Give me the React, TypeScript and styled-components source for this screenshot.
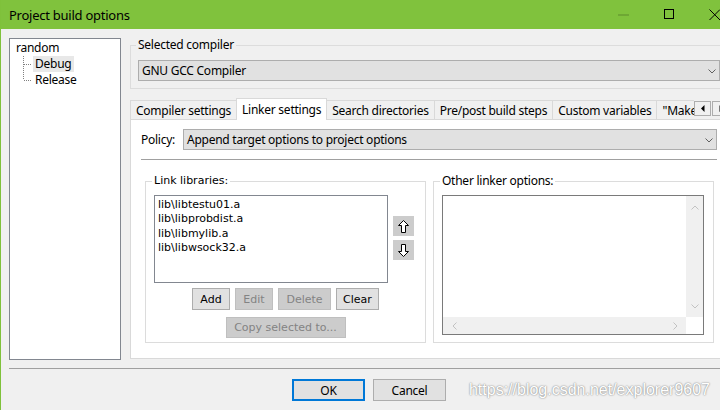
import React from "react";
import styled, { createGlobalStyle, css } from "styled-components";

const GlobalStyle = createGlobalStyle`
  html, body { margin: 0; padding: 0; background: #f0f0f0; }
  body { font-family: "Noto Sans", "Noto Sans CJK SC", sans-serif; }
  * { box-sizing: border-box; }
`;

const ui = css`
  font-family: "Noto Sans", "Noto Sans CJK SC", sans-serif;
  font-size: 12px;
  letter-spacing: -0.25px;
  color: #000;
`;

const classic = css`
  font-family: "DejaVu Sans", "Liberation Sans", sans-serif;
  font-size: 11px;
  color: #000;
`;

const Window = styled.div`
  width: 720px;
  height: 410px;
  overflow: hidden;
  background: #f0f0f0;
  border-left: 1px solid #7fc13b;
  display: flex;
  flex-direction: column;
`;

const TitleBar = styled.div`
  flex: 0 0 29px;
  background: #80c23d;
  display: flex;
  align-items: center;
  padding-left: 8px;
`;

const Title = styled.div`
  ${ui};
  font-size: 13px;
  line-height: 16px;
`;

const Caption = styled.div`
  margin-left: auto;
  margin-right: -18px;
  display: flex;
  height: 100%;
  flex-shrink: 0;
`;

const CaptionBtn = styled.div`
  width: 46px;
  height: 100%;
  display: flex;
  align-items: center;
  justify-content: center;
`;

const Main = styled.div`
  display: flex;
  align-items: flex-start;
  gap: 9px;
  padding: 9px 0 0 8px;
`;

const Tree = styled.div`
  ${ui};
  width: 112px;
  height: 322px;
  flex-shrink: 0;
  background: #fff;
  border: 1px solid #828790;
  padding: 1px 0 0 6px;
`;

const TreeRow = styled.div`
  display: flex;
  align-items: center;
  height: 16px;
  line-height: 16px;
`;

const TreeLabel = styled.span<{ $selected?: boolean }>`
  padding: 0 3px 0 2px;
  height: 16px;
  background: ${(p) => (p.$selected ? "#e8e8e8" : "transparent")};
`;

const RightCol = styled.div`
  width: 598px;
  flex-shrink: 0;
  display: flex;
  flex-direction: column;
`;

const Group = styled.fieldset<{ $w?: number; $h?: number }>`
  margin: 0;
  min-width: 0;
  border: 1px solid #dcdcdc;
  padding: 7px 8px 0 8px;
  ${(p) => (p.$w ? `width: ${p.$w}px; flex-shrink: 0;` : "")}
  ${(p) => (p.$h ? `height: ${p.$h}px;` : "")}
`;

const CompilerGroup = styled(Group)`
  padding: 8px 7px 7px 7px;
`;

const GroupLabel = styled.legend<{ $classic?: boolean }>`
  ${(p) => (p.$classic ? classic : ui)};
  line-height: 14px;
  padding: 0 2px;
  margin-left: -2px;
`;

const Combo = styled.div`
  ${ui};
  flex: 1;
  height: 21px;
  background: #e1e1e1;
  border: 1px solid #adadad;
  display: flex;
  align-items: center;
  justify-content: space-between;
  padding: 0 3px 0 3px;
  white-space: nowrap;
`;

const TabStrip = styled.div`
  display: flex;
  align-items: flex-start;
  height: 21px;
  margin-top: 9px;
  position: relative;
  z-index: 1;
`;

const TabList = styled.div`
  display: flex;
  align-items: flex-end;
  width: 564px;
  height: 22px;
  overflow: hidden;
  flex-shrink: 0;
`;

const Tab = styled.div<{ $active?: boolean }>`
  ${ui};
  flex-shrink: 0;
  white-space: nowrap;
  height: ${(p) => (p.$active ? 22 : 19)}px;
  margin-bottom: ${(p) => (p.$active ? 0 : 1)}px;
  padding: 0 5px;
  border: 1px solid #d9d9d9;
  border-bottom: none;
  background: ${(p) => (p.$active ? "#fff" : "#f0f0f0")};
  display: flex;
  align-items: center;
  & + & {
    margin-left: -1px;
  }
`;

const TabScroll = styled.div`
  display: flex;
  gap: 1px;
  margin-top: 3px;
`;

const TabScrollBtn = styled.div`
  width: 17px;
  height: 15px;
  background: #f0f0f0;
  border: 1px solid #adadad;
  display: flex;
  align-items: center;
  justify-content: center;
`;

const Panel = styled.div`
  height: 240px;
  background: #fff;
  border: 1px solid #d9d9d9;
  padding: 9px 10px 0 10px;
  display: flex;
  flex-direction: column;
`;

const PolicyRow = styled.div`
  display: flex;
  align-items: center;
  height: 21px;
`;

const PolicyLabel = styled.div`
  ${ui};
  width: 42px;
  flex-shrink: 0;
`;

const Separator = styled.div`
  height: 1px;
  margin-top: 9px;
  background: #a0a0a0;
`;

const GroupsRow = styled.div`
  display: flex;
  gap: 7px;
  margin-top: 14px;
  padding-left: 4px;
`;

const ListRow = styled.div`
  display: flex;
  align-items: flex-start;
`;

const ListBox = styled.div`
  ${classic};
  width: 234px;
  height: 88px;
  flex-shrink: 0;
  background: #fff;
  border: 1px solid #828790;
  padding: 2px 3px;
  line-height: 14.3px;
`;

const MoveCol = styled.div`
  display: flex;
  flex-direction: column;
  gap: 4px;
  margin-left: 5px;
  padding-top: 21px;
`;

const MoveBtn = styled.div`
  width: 21px;
  height: 20px;
  background: #cccccc;
  display: flex;
  align-items: center;
  justify-content: center;
`;

const ButtonRow = styled.div`
  display: flex;
  justify-content: center;
  gap: 5px;
  margin-top: 5px;
`;

const CenterRow = styled.div`
  display: flex;
  justify-content: center;
  margin-top: 7px;
`;

const SmallButton = styled.div<{ $w: number; $h?: number; $disabled?: boolean }>`
  ${classic};
  width: ${(p) => p.$w}px;
  height: ${(p) => p.$h ?? 22}px;
  display: flex;
  align-items: center;
  justify-content: center;
  white-space: nowrap;
  background: ${(p) => (p.$disabled ? "#cccccc" : "#e1e1e1")};
  border: 1px solid ${(p) => (p.$disabled ? "#bfbfbf" : "#adadad")};
  color: ${(p) => (p.$disabled ? "#838383" : "#000")};
`;

const TextArea = styled.div`
  width: 262px;
  height: 140px;
  background: #fff;
  border: 1px solid #7a7a7a;
  display: grid;
  grid-template-columns: 1fr 17px;
  grid-template-rows: 1fr 17px;
`;

const VScroll = styled.div`
  background: #f0f0f0;
  display: flex;
  flex-direction: column;
  align-items: center;
  justify-content: space-between;
  padding: 8px 0 7px;
`;

const HScroll = styled.div`
  background: #f0f0f0;
  display: flex;
  align-items: center;
  justify-content: space-between;
  padding: 0 7px 0 8px;
`;

const FooterRule = styled.div`
  height: 1px;
  margin: 8px 0 0 8px;
  background: #a0a0a0;
`;

const Footer = styled.div`
  position: relative;
  display: flex;
  gap: 8px;
  margin-top: 10px;
  padding-left: 291px;
  height: 22px;
`;

const DialogButton = styled.div<{ $default?: boolean }>`
  ${ui};
  width: 73px;
  height: 22px;
  display: flex;
  align-items: center;
  justify-content: center;
  background: #e1e1e1;
  border: ${(p) => (p.$default ? "2px solid #0078d7" : "1px solid #adadad")};
`;

const Watermark = styled.div`
  position: absolute;
  right: 10px;
  top: 0;
  line-height: 22px;
  font-family: "Liberation Sans", Arial, sans-serif;
  font-size: 16px;
  color: #ffffff;
  text-shadow: 0 0 2px rgba(0, 0, 0, 0.45), 0 0 1px rgba(0, 0, 0, 0.25);
  white-space: nowrap;
`;

const Chevron = ({ dir = "down", color = "#606060" }: { dir?: "down" | "up" | "left" | "right"; color?: string }) => {
  const rot = { down: 0, up: 180, left: 90, right: -90 }[dir];
  return (
    <svg width="8" height="8" viewBox="0 0 8 8" style={{ transform: `rotate(${rot}deg)` }}>
      <polyline points="0.5,2.5 4,6 7.5,2.5" fill="none" stroke={color} strokeWidth="1" />
    </svg>
  );
};

const MoveArrow = ({ down }: { down?: boolean }) => (
  <svg width="11" height="13" viewBox="0 0 11 13" style={down ? { transform: "scaleY(-1)" } : undefined}>
    <polygon
      points="5.5,0.5 10.5,5.5 7.5,5.5 7.5,12.5 3.5,12.5 3.5,5.5 0.5,5.5"
      fill="#fff"
      stroke="#000"
      strokeWidth="1"
    />
  </svg>
);

const TreeConnector = ({ last }: { last?: boolean }) => (
  <svg width="17" height="16" viewBox="0 0 17 16">
    <line x1="7.5" y1="0" x2="7.5" y2={last ? 8 : 16} stroke="#808080" strokeDasharray="1 1" />
    <line x1="8" y1="8.5" x2="16" y2="8.5" stroke="#808080" strokeDasharray="1 1" />
  </svg>
);

const libs = ["lib\\libtestu01.a", "lib\\libprobdist.a", "lib\\libmylib.a", "lib\\libwsock32.a"];
const tabs = [
  "Compiler settings",
  "Linker settings",
  "Search directories",
  "Pre/post build steps",
  "Custom variables",
  "\"Make\" commands",
];

export default function App() {
  return (
    <>
      <GlobalStyle />
      <Window>
        <TitleBar>
          <Title>Project build options</Title>
          <Caption>
            <CaptionBtn>
              <svg width="11" height="2" viewBox="0 0 11 2">
                <line x1="0" y1="1" x2="11" y2="1" stroke="rgba(0,0,0,0.28)" />
              </svg>
            </CaptionBtn>
            <CaptionBtn>
              <svg width="11" height="11" viewBox="0 0 11 11">
                <rect x="0.5" y="0.5" width="9" height="9" fill="none" stroke="#000" />
              </svg>
            </CaptionBtn>
            <CaptionBtn>
              <svg width="12" height="12" viewBox="0 0 12 12">
                <line x1="0.5" y1="0.5" x2="11" y2="11" stroke="#000" />
                <line x1="11" y1="0.5" x2="0.5" y2="11" stroke="#000" />
              </svg>
            </CaptionBtn>
          </Caption>
        </TitleBar>

        <Main>
          <Tree>
            <TreeRow>random</TreeRow>
            <TreeRow>
              <TreeConnector />
              <TreeLabel $selected>Debug</TreeLabel>
            </TreeRow>
            <TreeRow>
              <TreeConnector last />
              <TreeLabel>Release</TreeLabel>
            </TreeRow>
          </Tree>

          <RightCol>
            <CompilerGroup>
              <GroupLabel>Selected compiler</GroupLabel>
              <Combo>
                <span>GNU GCC Compiler</span>
                <Chevron />
              </Combo>
            </CompilerGroup>

            <TabStrip>
              <TabList>
                {tabs.map((t) => (
                  <Tab key={t} $active={t === "Linker settings"}>
                    {t}
                  </Tab>
                ))}
              </TabList>
              <TabScroll>
                <TabScrollBtn>
                  <svg width="4" height="7" viewBox="0 0 4 7">
                    <polygon points="3.5,0 3.5,7 0,3.5" fill="#000" />
                  </svg>
                </TabScrollBtn>
                <TabScrollBtn>
                  <svg width="4" height="7" viewBox="0 0 4 7">
                    <polygon points="0.5,0 0.5,7 4,3.5" fill="#000" />
                  </svg>
                </TabScrollBtn>
              </TabScroll>
            </TabStrip>

            <Panel>
              <PolicyRow>
                <PolicyLabel>Policy:</PolicyLabel>
                <Combo>
                  <span>Append target options to project options</span>
                  <Chevron />
                </Combo>
              </PolicyRow>
              <Separator />
              <GroupsRow>
                <Group $w={281} $h={169}>
                  <GroupLabel $classic>Link libraries:</GroupLabel>
                  <ListRow>
                    <ListBox>
                      {libs.map((l) => (
                        <div key={l}>{l}</div>
                      ))}
                    </ListBox>
                    <MoveCol>
                      <MoveBtn>
                        <MoveArrow />
                      </MoveBtn>
                      <MoveBtn>
                        <MoveArrow down />
                      </MoveBtn>
                    </MoveCol>
                  </ListRow>
                  <ButtonRow>
                    <SmallButton $w={38}>Add</SmallButton>
                    <SmallButton $w={38} $disabled>
                      Edit
                    </SmallButton>
                    <SmallButton $w={53} $disabled>
                      Delete
                    </SmallButton>
                    <SmallButton $w={43}>Clear</SmallButton>
                  </ButtonRow>
                  <CenterRow>
                    <SmallButton $w={120} $h={21} $disabled>
                      Copy selected to...
                    </SmallButton>
                  </CenterRow>
                </Group>

                <Group $w={281} $h={169}>
                  <GroupLabel>Other linker options:</GroupLabel>
                  <TextArea>
                    <div />
                    <VScroll>
                      <Chevron dir="up" color="#c2c2c2" />
                      <Chevron dir="down" color="#c2c2c2" />
                    </VScroll>
                    <HScroll>
                      <Chevron dir="left" color="#c2c2c2" />
                      <Chevron dir="right" color="#c2c2c2" />
                    </HScroll>
                    <div />
                  </TextArea>
                </Group>
              </GroupsRow>
            </Panel>
          </RightCol>
        </Main>

        <FooterRule />
        <Footer>
          <DialogButton $default>OK</DialogButton>
          <DialogButton>Cancel</DialogButton>
          <Watermark>https://blog.csdn.net/explorer9607</Watermark>
        </Footer>
      </Window>
    </>
  );
}
